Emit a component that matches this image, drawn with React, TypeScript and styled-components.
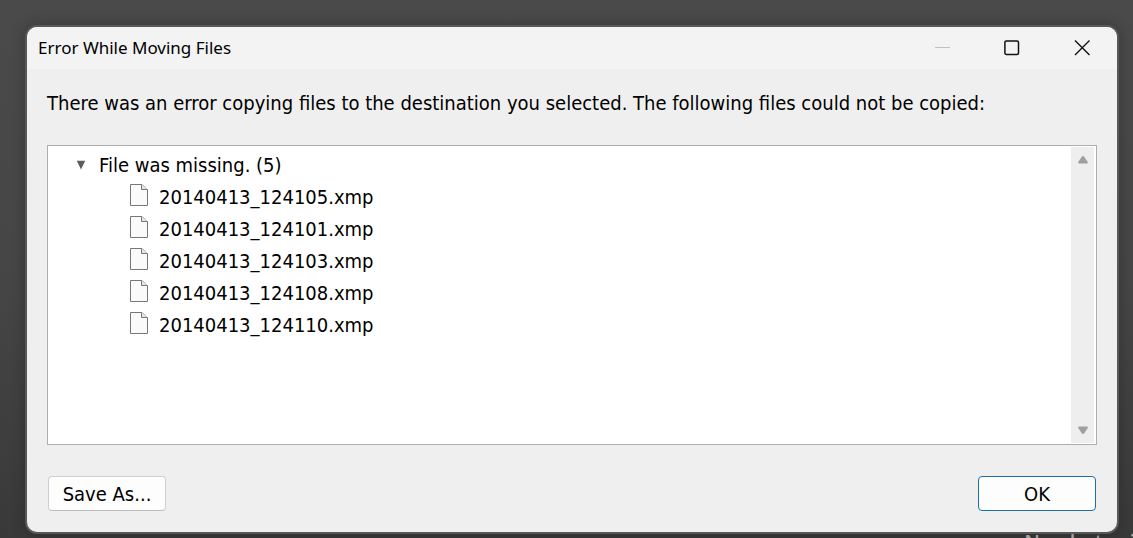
import React from "react";
import styled, { createGlobalStyle, css } from "styled-components";

const uiFont = `"DejaVu Sans Condensed", "Noto Sans", sans-serif`;

const GlobalStyle = createGlobalStyle`
  *, *::before, *::after { box-sizing: border-box; }
  html, body { margin: 0; }
  body { background: #484848; overflow: hidden; }
`;

const Desktop = styled.div`
  position: relative;
  height: 100vh;
  padding: 27px 16px 6px 27px;
  background: linear-gradient(#4a4a4a, #464646 50%, #393939);
  font-family: ${uiFont};
  font-size: 20px;
  line-height: 24px;
  color: #000;
`;

const BackgroundCaption = styled.div`
  position: absolute;
  right: -15px;
  bottom: -16px;
  font-family: "Open Sans", sans-serif;
  font-weight: 600;
  font-size: 20px;
  line-height: 24px;
  white-space: nowrap;
  color: #b4b4b4;
`;

const Dialog = styled.section`
  position: relative;
  display: flex;
  flex-direction: column;
  height: 100%;
  border-radius: 10px;
  background: #efefef;
  box-shadow: 0 0 0 2px #585858, 0 0 14px 2px rgba(0, 0, 0, 0.25);
  overflow: hidden;
`;

const TitleBar = styled.header`
  display: flex;
  align-items: center;
  height: 42px;
  flex: none;
  padding-left: 11px;
  background: #f3f3f3;
`;

const Title = styled.h1`
  flex: 1;
  margin: 0;
  font-family: "Noto Sans", sans-serif;
  font-size: 17px;
  line-height: 24px;
  font-weight: 400;
`;

const WindowButton = styled.button`
  display: grid;
  place-items: center;
  width: 70px;
  height: 42px;
  padding: 0;
  border: 0;
  background: transparent;
  color: #111;

  &:disabled { color: #c2c2c2; }
`;

const Content = styled.div`
  display: flex;
  flex: 1;
  flex-direction: column;
  min-height: 0;
  padding: 22px 20px 21px;
`;

const Message = styled.p`
  margin: 0 0 30px;
`;

const ListBox = styled.div`
  display: flex;
  flex: 1;
  min-height: 0;
  padding: 1px;
  border: 1px solid #adadb3;
  background: #fff;
`;

const Tree = styled.ul`
  flex: 1;
  margin: 0;
  padding: 2px 0 0 26px;
  list-style: none;
`;

const Branch = styled.ul`
  margin: 0;
  padding: 0 0 0 55px;
  list-style: none;
`;

const Row = styled.div`
  display: flex;
  align-items: center;
  height: 32px;
`;

const Expander = styled.button`
  display: grid;
  place-items: center;
  width: 12px;
  height: 16px;
  margin-right: 12px;
  padding: 0;
  border: 0;
  background: transparent;
`;

const FileIcon = styled.svg`
  width: 18px;
  height: 22px;
  margin: 0 11px 4px 0;
`;

const ScrollTrack = styled.div`
  display: flex;
  flex-direction: column;
  justify-content: space-between;
  width: 23px;
  margin-right: 1px;
  background: #eeeeee;
`;

const ScrollButton = styled.button`
  display: grid;
  place-items: center;
  width: 23px;
  height: 26px;
  padding: 0;
  border: 0;
  background: transparent;
  color: #9f9f9f;
`;

const Actions = styled.footer`
  display: flex;
  justify-content: space-between;
  padding: 31px 1px 0;
`;

const ActionButton = styled.button<{ $primary?: boolean }>`
  width: 118px;
  height: 35px;
  padding: 0;
  border: 1px solid #d0d0d0;
  border-bottom-color: #bcbcbc;
  border-radius: 4px;
  background: #fdfdfd;
  color: #000;
  font: inherit;
  ${({ $primary }) => $primary && css`border-color: #1a6fae;`}
`;

const files = [
  "20140413_124105.xmp",
  "20140413_124101.xmp",
  "20140413_124103.xmp",
  "20140413_124108.xmp",
  "20140413_124110.xmp",
];

export default function App() {
  return (
    <Desktop>
      <GlobalStyle />
      <BackgroundCaption>No photos in</BackgroundCaption>
      <Dialog role="dialog" aria-labelledby="dialog-title">
        <TitleBar>
          <Title id="dialog-title">Error While Moving Files</Title>
          <WindowButton aria-label="Minimize" disabled>
            <svg width="16" height="16" stroke="currentColor"><path d="M1 7.5H16" /></svg>
          </WindowButton>
          <WindowButton aria-label="Maximize">
            <svg width="16" height="16" fill="none" stroke="currentColor" strokeWidth="1.5">
              <rect x=".9" y=".9" width="13.6" height="13.6" rx="1.5" />
            </svg>
          </WindowButton>
          <WindowButton aria-label="Close">
            <svg width="16" height="16" stroke="currentColor" strokeWidth="1.4"><path d="M1 .5 15.5 15M15.5 .5 1 15" /></svg>
          </WindowButton>
        </TitleBar>
        <Content>
          <Message>
            There was an error copying files to the destination you selected. The following files could not be copied:
          </Message>
          <ListBox>
            <Tree>
              <li>
                <Row>
                  <Expander aria-label="Collapse group" aria-expanded="true">
                    <svg width="10" height="10" fill="#5c5c5c"><path d="M.8 .8H9.2L5 9.5Z" /></svg>
                  </Expander>
                  File was missing. (5)
                </Row>
                <Branch>
                  {files.map((name) => (
                    <li key={name}>
                      <Row>
                        <FileIcon viewBox="0 0 18 22" fill="#fafafa" stroke="#777">
                          <path d="M.5 .5H12L17.5 6V21.5H.5Z" />
                          <path d="M11.5 .5V5.5H17.5" fill="#e4e4e4" />
                        </FileIcon>
                        {name}
                      </Row>
                    </li>
                  ))}
                </Branch>
              </li>
            </Tree>
            <ScrollTrack>
              <ScrollButton aria-label="Scroll up">
                <svg width="10" height="8" fill="currentColor"><path d="M4 .5Q5 -.3 6 .5L9.8 6Q10 7.5 9 7.5H1Q0 7.5 .2 6Z" /></svg>
              </ScrollButton>
              <ScrollButton aria-label="Scroll down">
                <svg width="10" height="8" fill="currentColor"><path d="M4 7.5Q5 8.3 6 7.5L9.8 2Q10 .5 9 .5H1Q0 .5 .2 2Z" /></svg>
              </ScrollButton>
            </ScrollTrack>
          </ListBox>
          <Actions>
            <ActionButton>Save As...</ActionButton>
            <ActionButton $primary>OK</ActionButton>
          </Actions>
        </Content>
      </Dialog>
    </Desktop>
  );
}
